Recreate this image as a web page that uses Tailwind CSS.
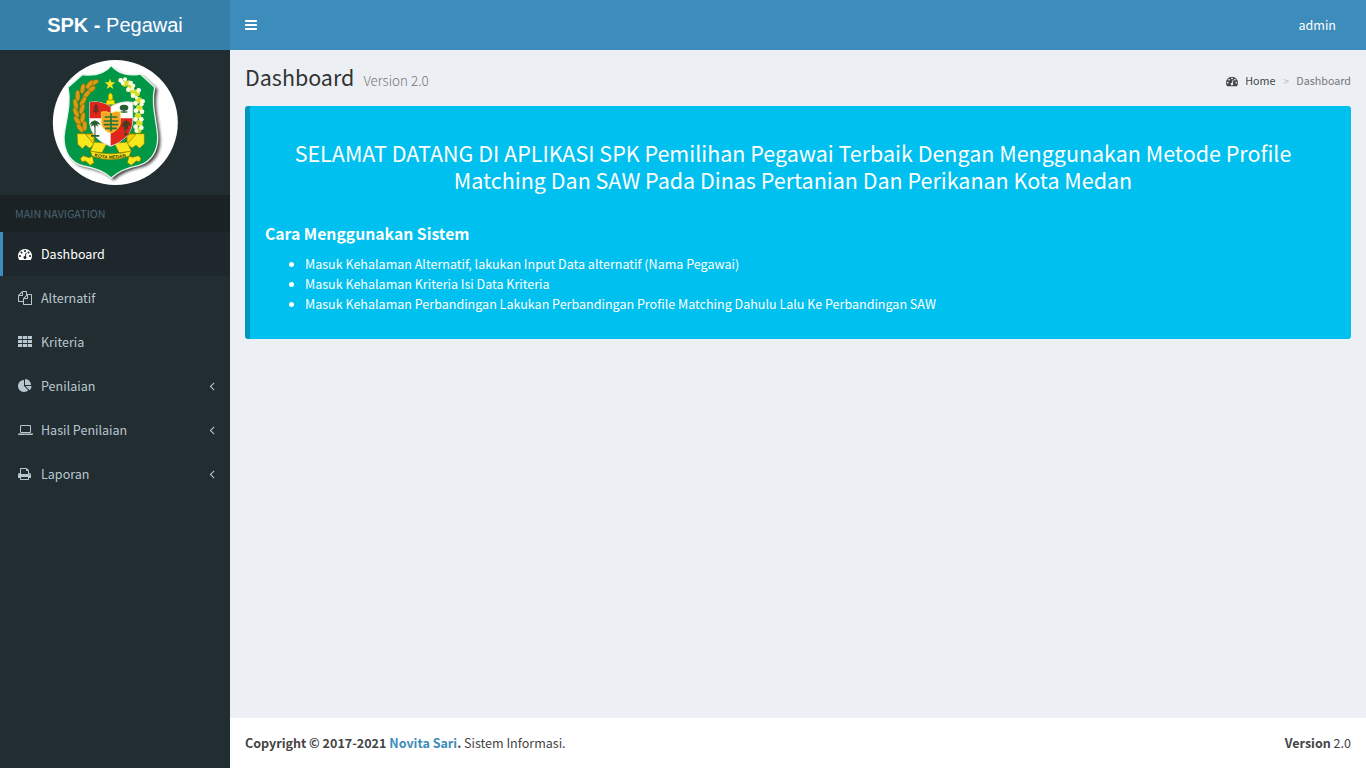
<!DOCTYPE html>
<html lang="id">
<head>
<meta charset="utf-8">
<title>SPK - Pegawai</title>
<script src="https://cdn.jsdelivr.net/npm/@tailwindcss/browser@4"></script>
</head>
<body class="flex h-[768px] w-[1366px] overflow-hidden bg-[#ecf0f5] font-['Noto_Sans_CJK_SC','Noto_Sans',sans-serif] text-[12.545px] leading-5 text-[#333]">
<svg class="hidden">
  <symbol id="gauge" viewBox="0 0 1792 1792"><path d="M384 1152q0-53-37.5-90.5t-90.5-37.5-90.5 37.5-37.5 90.5 37.5 90.5 90.5 37.5 90.5-37.5 37.5-90.5zm192-448q0-53-37.5-90.5t-90.5-37.5-90.5 37.5-37.5 90.5 37.5 90.5 90.5 37.5 90.5-37.5 37.5-90.5zm428 481l101-382q6-26-7.500-48.500t-38.500-29.500-48 6.500-30 39.500l-101 382q-60 5-107 43.500t-63 98.500q-20 77 20 146t117 89 146-20 89-117q16-60-6-117t-72-91zm660-33q0-53-37.500-90.500t-90.500-37.500-90.500 37.500-37.500 90.500 37.500 90.500 90.500 37.500 90.500-37.500 37.500-90.500zm-640-640q0-53-37.500-90.500t-90.500-37.500-90.500 37.500-37.500 90.500 37.500 90.500 90.500 37.500 90.500-37.500 37.500-90.500zm448 192q0-53-37.500-90.500t-90.500-37.500-90.500 37.500-37.500 90.500 37.500 90.500 90.500 37.500 90.500-37.500 37.500-90.500zm320 448q0 261-141 483-19 29-54 29h-1402q-35 0-54-29-141-221-141-483 0-182 71-348t191-286 286-191 348-71 348 71 286 191 191 286 71 348z"/></symbol>
  <symbol id="angle" viewBox="0 0 640 1792"><path d="M627 544q0 13-10 23l-393 393 393 393q10 10 10 23t-10 23l-50 50q-10 10-23 10t-23-10l-466-466q-10-10-10-23t10-23l466-466q10-10 23-10t23 10l50 50q10 10 10 23z"/></symbol>
</svg>

<aside class="flex w-[230px] shrink-0 flex-col bg-[#222d32] text-[#b8c7ce]">
  <div class="h-[50px] bg-[#367fa9] text-center font-['Liberation_Sans',Arial,sans-serif] text-[20px] leading-[50px] text-white"><b>SPK -</b> Pegawai</div>
  <div class="h-[145px] shrink-0 pl-[45px]">
    <svg class="size-[140px]" viewBox="0 0 420 420">
      <defs><filter id="sh"><feGaussianBlur stdDeviation="5"/></filter><clipPath id="round"><circle cx="211" cy="217.500" r="187.500"/></clipPath></defs>
      <circle cx="211" cy="217.500" r="187.500" fill="#fff"/>
      <g clip-path="url(#round)">
        <path d="M207 56C190 77 156 86 121 81L79 118C89 167 70 221 66 266C65 314 87 346 124 354Q179 364 207 391Q234 363 290 352C326 342 347 311 346 268C344 222 325 168 338 118L294 79C259 87 226 77 207 56Z" fill="#222" filter="url(#sh)" opacity=".85"/>
        <path d="M199 47C180 70 148 79 112 74L69 112C80 163 61 216 57 261C56 308 79 340 116 348Q171 358 199 384Q226 357 282 346C317 336 339 304 338 261C336 215 317 162 329 112L286 72C251 80 218 70 199 47Z" fill="#009846" stroke="#e4f3ea" stroke-width="4"/>
      </g>
      <path d="M195 86l4 11h12l-10 8 4 12-10-7-10 7 4-12-10-8h12z" fill="#f8e71c"/>
      <path d="M190 138q0-7 6-9 6 2 7 9v12h-13zM186 150h21l4 14h-29z" fill="#f7e600" stroke="#9b8700" stroke-width="1.500"/>
      <g fill="#d99b14" stroke="#8d6200" stroke-width="1.500">
        <ellipse cx="147" cy="98" rx="7" ry="15" transform="rotate(65 147 98)"/><ellipse cx="133" cy="104" rx="7" ry="15" transform="rotate(38 133 104)"/><ellipse cx="139" cy="118" rx="7" ry="14" transform="rotate(55 139 118)"/><ellipse cx="113" cy="116" rx="7" ry="15" transform="rotate(12 113 116)"/><ellipse cx="125" cy="133" rx="7" ry="15" transform="rotate(40 125 133)"/><ellipse cx="98" cy="137" rx="7" ry="16"/><ellipse cx="114" cy="154" rx="7" ry="16" transform="rotate(30 114 154)"/><ellipse cx="92" cy="163" rx="7" ry="16" transform="rotate(-12 92 163)"/><ellipse cx="111" cy="177" rx="7" ry="16" transform="rotate(18 111 177)"/><ellipse cx="93" cy="188" rx="7" ry="16" transform="rotate(-24 93 188)"/><ellipse cx="113" cy="203" rx="7" ry="16" transform="rotate(12 113 203)"/><ellipse cx="97" cy="212" rx="7" ry="16" transform="rotate(-32 97 212)"/><ellipse cx="119" cy="228" rx="7" ry="15"/><ellipse cx="105" cy="234" rx="7" ry="15" transform="rotate(-35 105 234)"/>
      </g>
      <g fill="#d7dd29"><circle cx="239" cy="101" r="9"/><circle cx="257" cy="112" r="10"/><circle cx="275" cy="130" r="10"/><circle cx="264" cy="125" r="9"/><circle cx="281" cy="151" r="10"/><circle cx="283" cy="174" r="10"/><circle cx="279" cy="198" r="10"/><circle cx="283" cy="219" r="10"/><circle cx="280" cy="241" r="9"/><circle cx="250" cy="99" r="8"/></g>
      <g fill="#fffde0"><circle cx="227" cy="91" r="7"/><circle cx="240" cy="88" r="6"/><circle cx="233" cy="99" r="6"/><circle cx="257" cy="99" r="7"/><circle cx="265" cy="107" r="6"/><circle cx="250" cy="119" r="7"/><circle cx="262" cy="116" r="5"/><circle cx="281" cy="121" r="7"/><circle cx="264" cy="137" r="7"/><circle cx="274" cy="143" r="5"/><circle cx="293" cy="154" r="7"/><circle cx="271" cy="160" r="7"/><circle cx="290" cy="163" r="6"/><circle cx="273" cy="182" r="7"/><circle cx="291" cy="185" r="7"/><circle cx="271" cy="208" r="7"/><circle cx="289" cy="208" r="7"/><circle cx="272" cy="230" r="7"/><circle cx="289" cy="233" r="7"/><circle cx="274" cy="242" r="6"/></g>
      <g fill="#f8e71c" stroke="#857500" stroke-width="2">
        <path d="M96 251h52v32l-14 12-12-9-10 10-14-13zM298 251h-52v32l15 11 12-8 11 9 14-13z"/>
        <path d="M121 252l26 31v-31zM273 252l-27 31v-31z" fill="#f3d400"/>
        <path d="M148 276l-13 29 36 3 15-28zM246 276l14 29-38 3-14-28z"/>
        <path d="M136 303Q197 320 259 303L252 319Q197 339 142 319ZM142 318l5 20-11 8-15-13-10 3-5-10 8-9 19 6zM252 318l-5 20 12 8 15-13 10 2 4-10-8-8-18 5z"/>
      </g>
      <path d="M134 157Q165 151 197 170Q230 151 263 157V219Q256 267 197 289Q139 267 134 219Z" fill="#fff" stroke="#f1dede" stroke-width="3"/>
      <path d="M134 157Q165 151 197 170V205H134ZM197 205H262V219Q257 267 197 287Z" fill="#df261d"/>
      <g stroke-width="3"><path d="M153 177v14" stroke="#402c18"/><path d="M237 174v15M150 228v31M242 226v29" stroke="#31502b"/></g>
      <g fill="#275e32"><path d="M153 160l8 15-4-1 5 12h-18l5-12-4 1z" fill="#6a3021"/><ellipse cx="237" cy="173" rx="13" ry="9"/><path d="M227 184h20v4h-20z"/><path d="M149 211l10 4 8 9-11-2 5 8-9-4-3 8-3-8-9 4 4-8-7 2 5-8zM138 255h25v5h-25z"/><path d="M243 210l9 6 6 12-9-2 1 14-7-6-6 8-1-13-7 3 4-13z" fill="#51391d"/><path d="M237 251h14v5h-14z" fill="#51391d"/></g>
      <path d="M169 186Q184 181 197 190Q211 181 226 186V221Q221 240 197 250Q173 240 169 221Z" fill="#f7a722" stroke="#f5ed43" stroke-width="2"/>
      <path d="M198 190v54M179 201h38M176 213h44M176 224h44M180 235h36" stroke="#267539" stroke-width="5"/>
      <path id="band" d="M148 319Q197 334 248 319" fill="none"/>
      <text class="font-['Liberation_Sans'] text-[14px] font-bold" fill="#3d3500"><textPath href="#band" textLength="97" lengthAdjust="spacingAndGlyphs">KOTA MEDAN</textPath></text>
    </svg>
  </div>
  <div class="h-[37px] shrink-0 bg-[#1a2226] pl-[15px] text-[10.74px] leading-[37px] text-[#4b646f]">MAIN NAVIGATION</div>
  <nav>
    <a class="flex h-11 items-center border-l-[3px] border-[#3c8dbc] bg-[#1e282c] pl-[15px] text-white"><svg class="mr-[9px] size-[14px] fill-current"><use href="#gauge"/></svg>Dashboard</a>
    <a class="flex h-11 items-center border-l-[3px] border-transparent pl-[15px]"><svg class="mr-[9px] size-[14px] fill-current" viewBox="0 0 1792 1792"><path d="M1696 384q40 0 68 28t28 68v1216q0 40-28 68t-68 28h-960q-40 0-68-28t-28-68v-288h-544q-40 0-68-28t-28-68v-672q0-40 20-88t48-76l408-408q28-28 76-48t88-20h416q40 0 68 28t28 68v328q68-40 128-40h416zm-544 213l-299 299h299v-299zm-640-384l-299 299h299v-299zm196 647l316-316v-416h-384v416q0 40-28 68t-68 28h-416v640h512v-256q0-40 20-88t48-76zm956 804v-1152h-384v416q0 40-28 68t-68 28h-416v640h896z"/></svg>Alternatif</a>
    <a class="flex h-11 items-center border-l-[3px] border-transparent pl-[15px]"><svg class="mr-[9px] size-[14px] fill-current" viewBox="0 0 14 14"><path d="M0 1h4.200v3H0zM4.900 1h4.200v3H4.900zM9.800 1h4.200v3H9.800zM0 5h4.200v3H0zM4.900 5h4.200v3H4.900zM9.800 5h4.200v3H9.800zM0 9h4.200v3H0zM4.900 9h4.200v3H4.900zM9.800 9h4.200v3H9.800z"/></svg>Kriteria</a>
    <a class="flex h-11 items-center border-l-[3px] border-transparent pr-[15px] pl-[15px]"><svg class="mr-[9px] size-[14px] fill-current" viewBox="0 0 1792 1792"><path d="M768 890l546 546q-106 108-247.500 168t-298.500 60q-209 0-385.500-103t-279.500-279.500-103-385.500 103-385.500 279.500-279.500 385.500-103v762zm187 6h773q0 157-60 298.500t-168 247.500zm709-128h-768v-768q209 0 385.500 103t279.500 279.500 103 385.500z"/></svg>Penilaian<svg class="ml-auto h-[14px] w-[6px] fill-current"><use href="#angle"/></svg></a>
    <a class="flex h-11 items-center border-l-[3px] border-transparent pr-[15px] pl-[15px]"><svg class="mr-[8px] h-[14px] w-[15px] fill-current" viewBox="0 0 1920 1792"><path d="M416 1280q-66 0-113-47t-47-113v-704q0-66 47-113t113-47h1088q66 0 113 47t47 113v704q0 66-47 113t-113 47h-1088zm-32-864v704q0 13 9.500 22.500t22.500 9.500h1088q13 0 22.500-9.500t9.500-22.500v-704q0-13-9.500-22.500t-22.500-9.500h-1088q-13 0-22.500 9.500t-9.500 22.500zm1376 928h160v96q0 40-47 68t-113 28h-1600q-66 0-113-28t-47-68v-96h1760zm-720 96q16 0 16-16t-16-16h-160q-16 0-16 16t16 16h160z"/></svg>Hasil Penilaian<svg class="ml-auto h-[14px] w-[6px] fill-current"><use href="#angle"/></svg></a>
    <a class="flex h-11 items-center border-l-[3px] border-transparent pr-[15px] pl-[15px]"><svg class="mr-[10px] h-[14px] w-[13px] fill-current" viewBox="64 0 1664 1792"><path d="M448 1536h896v-256h-896v256zm0-640h896v-384h-160q-40 0-68-28t-28-68v-160h-640v640zm1152 64q0-26-19-45t-45-19-45 19-19 45 19 45 45 19 45-19 19-45zm128 0v416q0 13-9.500 22.500t-22.500 9.500h-224v160q0 40-28 68t-68 28h-960q-40 0-68-28t-28-68v-160h-224q-13 0-22.500-9.500t-9.500-22.500v-416q0-79 56.500-135.500t135.500-56.500h64v-544q0-40 28-68t68-28h672q40 0 88 20t76 48l152 152q28 28 48 76t20 88v256h64q79 0 135.500 56.500t56.500 135.500z"/></svg>Laporan<svg class="ml-auto h-[14px] w-[6px] fill-current"><use href="#angle"/></svg></a>
  </nav>
</aside>

<div class="flex min-w-0 flex-1 flex-col">
  <header class="flex h-[50px] shrink-0 items-center justify-between bg-[#3c8dbc] pr-[30px] pl-[15px] text-white">
    <svg class="h-[14px] w-3 fill-current" viewBox="0 0 12 14"><rect y="2" width="12" height="2" rx=".4"/><rect y="6" width="12" height="2" rx=".4"/><rect y="10" width="12" height="2" rx=".4"/></svg>
    <span>admin</span>
  </header>
  <div class="flex h-14 shrink-0 items-center justify-between px-[15px]">
    <h1 class="flex items-baseline text-[21.480px] leading-6"><span>Dashboard</span><small class="ml-[9px] text-[13.430px] font-light text-[#777]">Version 2.0</small></h1>
    <div class="mt-[6px] flex items-center text-[10.740px] text-[#444]"><svg class="mr-[7px] size-3 fill-current"><use href="#gauge"/></svg>Home<span class="pr-[7px] pl-2 text-[#bbb]">&gt;</span><span class="text-[#777]">Dashboard</span></div>
  </div>
  <main class="flex-1 px-[15px]">
    <section class="h-[233px] rounded-[3px] border-l-[5px] border-[#0097bc] bg-[#00c0ef] pt-[33px] pr-[30px] pl-[15px] text-white">
      <h3 class="text-center text-[21.490px] leading-[27px]">SELAMAT DATANG DI APLIKASI SPK Pemilihan Pegawai Terbaik Dengan Menggunakan Metode Profile<br>Matching Dan SAW Pada Dinas Pertanian Dan Perikanan Kota Medan</h3>
      <h4 class="mt-[31px] text-[15.720px] leading-5 font-bold">Cara Menggunakan Sistem</h4>
      <ul class="mt-[10px] pl-6">
        <li class="flex items-center gap-[11px] before:size-[5px] before:rounded-full before:bg-white">Masuk Kehalaman Alternatif, lakukan Input Data alternatif (Nama Pegawai)</li>
        <li class="flex items-center gap-[11px] before:size-[5px] before:rounded-full before:bg-white">Masuk Kehalaman Kriteria Isi Data Kriteria</li>
        <li class="flex items-center gap-[11px] before:size-[5px] before:rounded-full before:bg-white">Masuk Kehalaman Perbandingan Lakukan Perbandingan Profile Matching Dahulu Lalu Ke Perbandingan SAW</li>
      </ul>
    </section>
  </main>
  <footer class="flex h-[50px] shrink-0 items-center justify-between bg-white px-[15px] text-[#444]">
    <div><b>Copyright © 2017-2021 <span class="text-[#3c8dbc]">Novita Sari</span>.</b> Sistem Informasi.</div>
    <div><b>Version</b> 2.0</div>
  </footer>
</div>
</body>
</html>
